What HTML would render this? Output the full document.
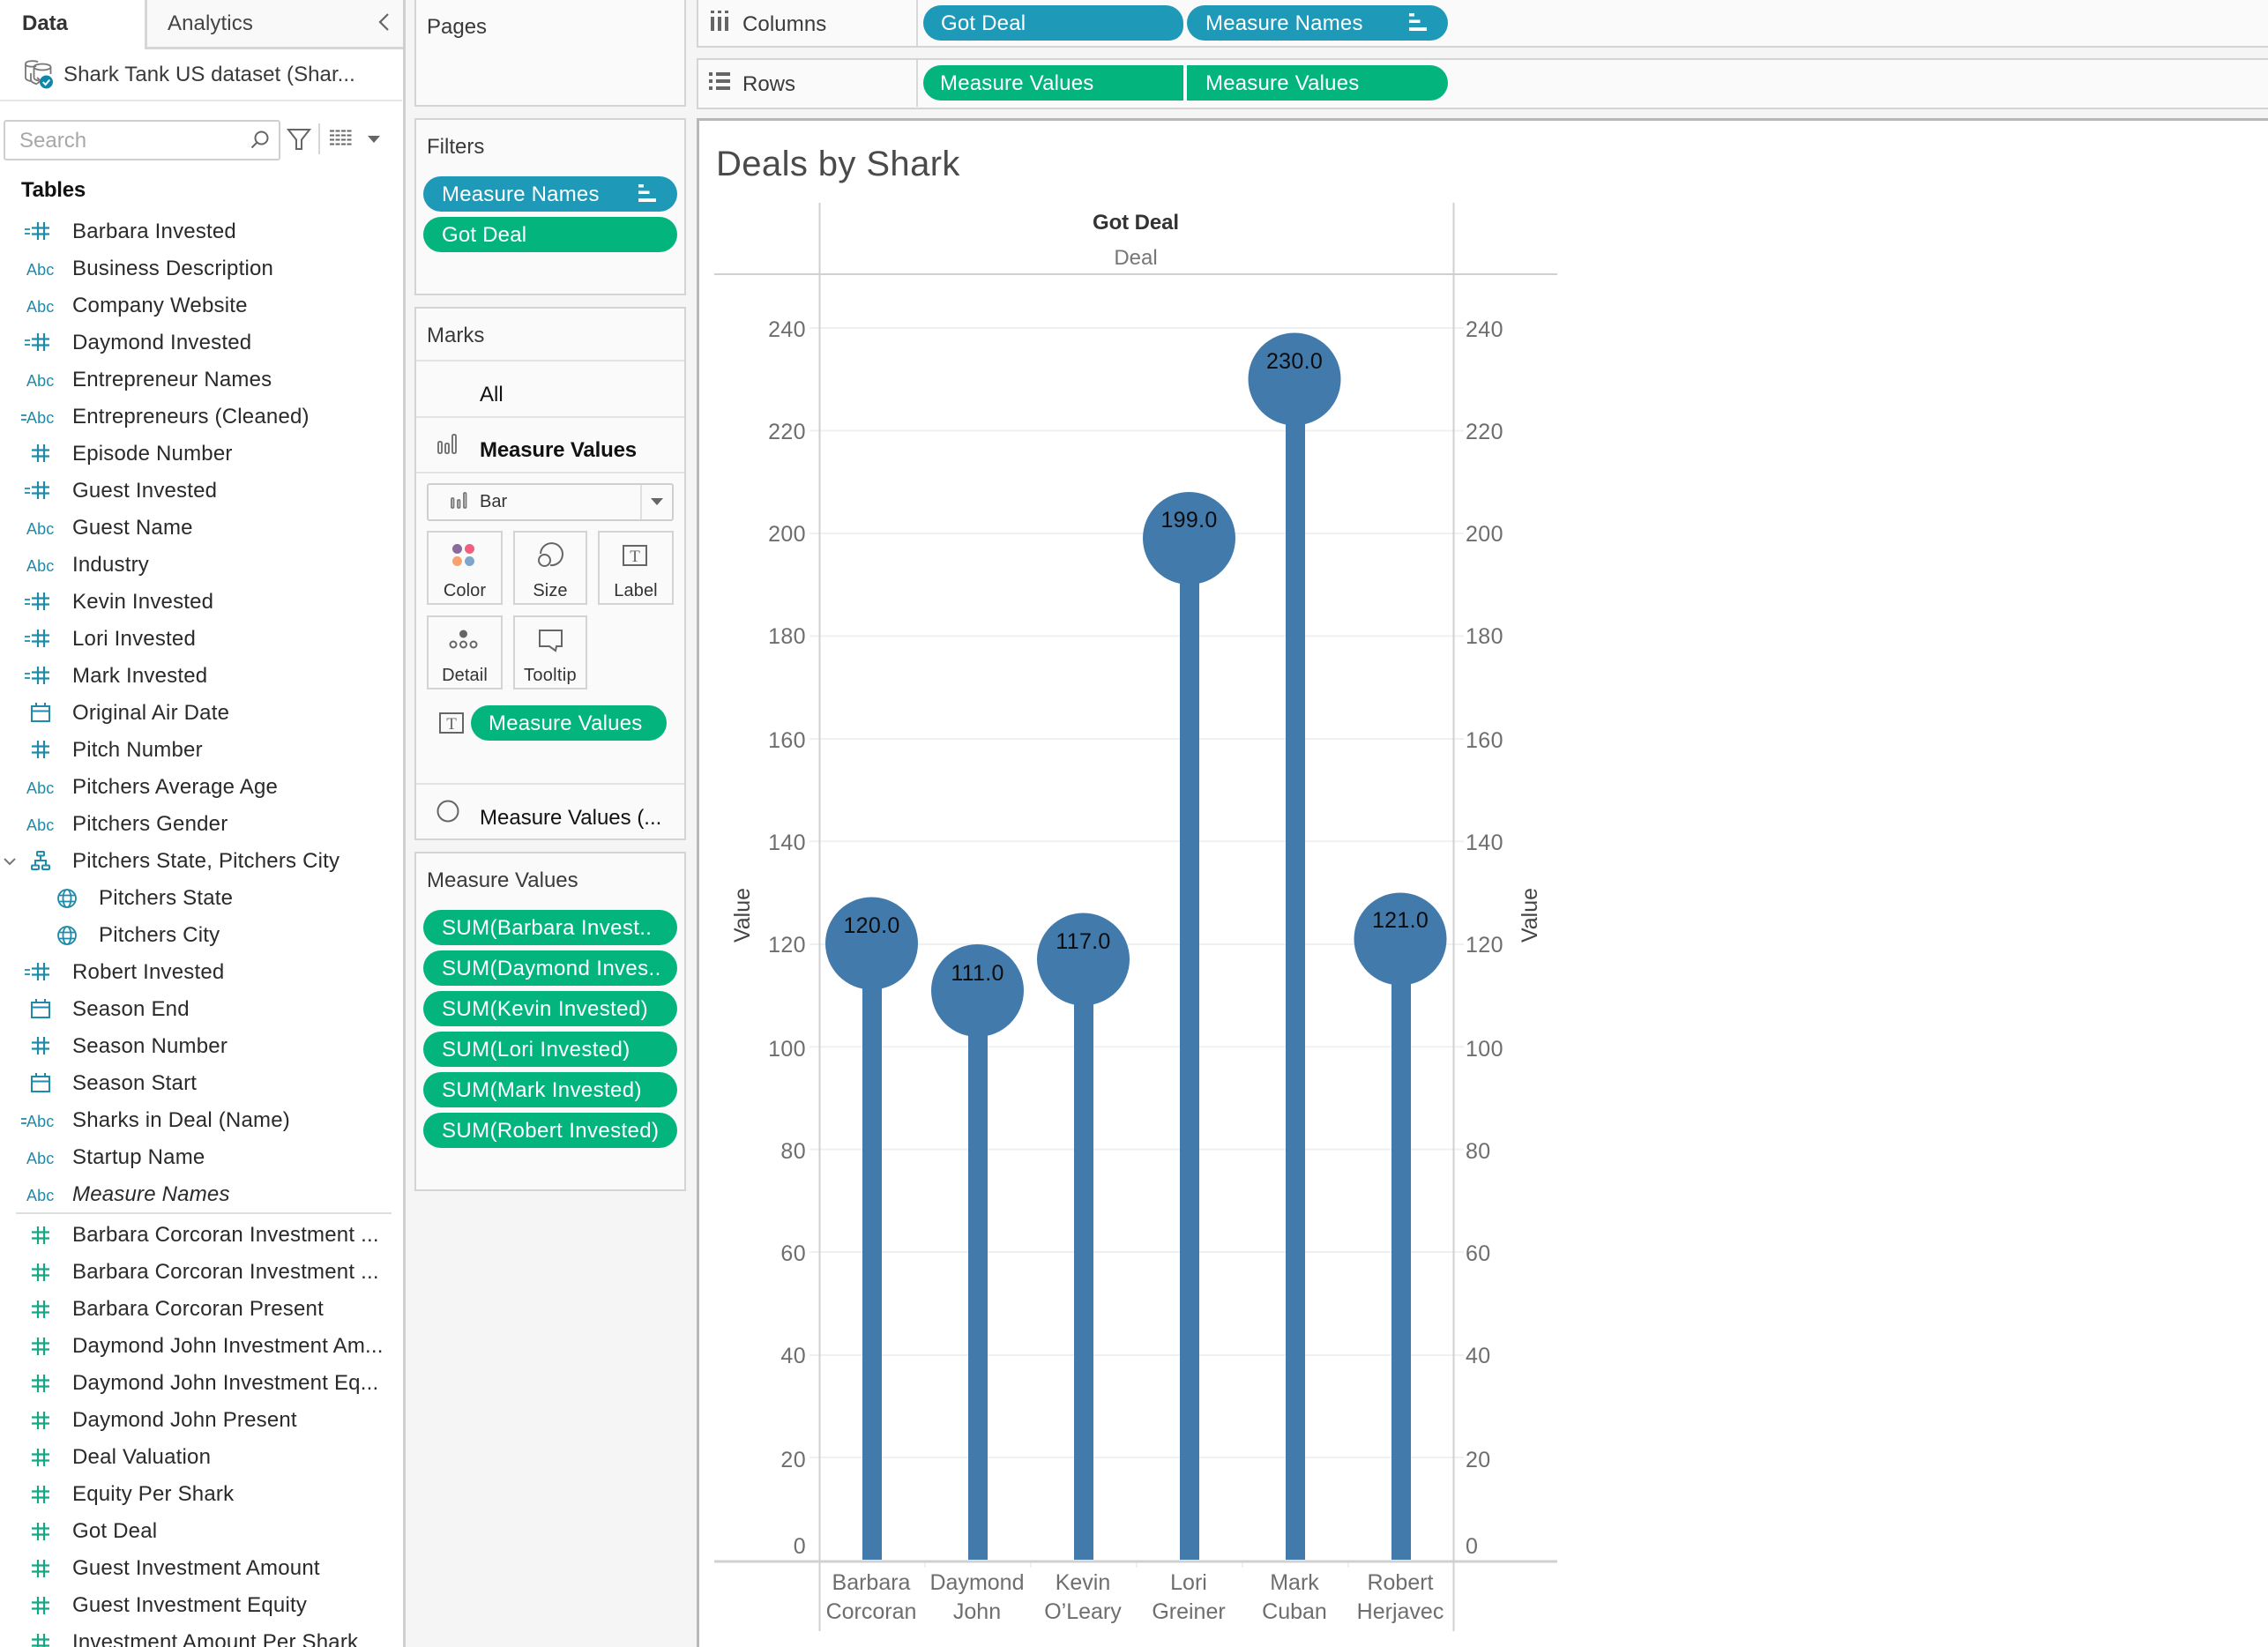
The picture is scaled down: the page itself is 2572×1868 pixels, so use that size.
<!DOCTYPE html>
<html><head><meta charset="utf-8"><title>Deals by Shark</title>
<style>
html,body{margin:0;padding:0;width:2572px;height:1868px;overflow:hidden;background:#f5f5f5;font-family:"Liberation Sans",sans-serif;font-size:24px;color:#2b2b2b}
.a{position:absolute;white-space:nowrap}
#side{position:absolute;left:0;top:0;width:457px;height:1868px;background:#fff;border-right:3px solid #cfcfcf;overflow:hidden}
#list{position:absolute;left:0;top:241px;width:457px}
.r{height:42px;line-height:44px;padding-left:82px;position:relative;white-space:nowrap;color:#2a2a2a;letter-spacing:.2px}
.r.s{padding-left:112px}
.r svg{position:absolute;overflow:visible}
.r .ab{position:absolute;left:30px;top:1px;font-size:18px;color:#1f8bab;letter-spacing:.1px}
.h{left:36px;top:11px;width:20px;height:20px}
.m .h{left:36px;top:12px}
.e{left:28px;top:18px;width:6px;height:8px}
.e2{left:24px;top:19px;width:6px;height:8px}
.c{left:35px;top:10px;width:22px;height:22px}
.g{left:65px;top:11px;width:22px;height:22px}
.card{position:absolute;left:470px;width:304px;background:#fafafa;border:2px solid #d4d4d4}
.sep{position:absolute;left:472px;width:304px;height:2px;background:#e3e3e3}
.p{position:absolute;height:40px;line-height:41px;color:#fff;white-space:nowrap;box-sizing:border-box;padding-left:21px;letter-spacing:.2px}
.sm{letter-spacing:.38px}
.bl{background:#1f99b8}.gr{background:#03b57c}
.pr{border-radius:20px}
.btn{position:absolute;box-sizing:border-box;border:2px solid #d4d4d4;height:84px;background:#fafafa}
.lb{position:absolute;left:0;right:0;text-align:center;top:48px;font-size:20px;line-height:36px;color:#333;letter-spacing:.1px}
</style></head><body>
<svg width="0" height="0" style="position:absolute"><defs>
<symbol id="hb" viewBox="0 0 20 20"><path d="M7 0V20M14 0V20M0 6.500H20M0 13.500H20" stroke="#1f8bab" stroke-width="2.200" fill="none"/></symbol>
<symbol id="hg" viewBox="0 0 20 20"><path d="M7 0V20M14 0V20M0 6.500H20M0 13.500H20" stroke="#12a884" stroke-width="2.200" fill="none"/></symbol>
<symbol id="eq" viewBox="0 0 6 8"><path d="M0 1H6M0 6H6" stroke="#1f8bab" stroke-width="1.800" fill="none"/></symbol>
<symbol id="cal" viewBox="0 0 22 22"><path d="M1 4H21V21H1ZM1 9.500H21M6 0V4M16 0V4" stroke="#1f8bab" stroke-width="2" fill="none"/></symbol>
<symbol id="glb" viewBox="0 0 22 22"><g stroke="#1f8bab" stroke-width="1.800" fill="none"><circle cx="11" cy="11" r="10"/><ellipse cx="11" cy="11" rx="4.500" ry="10"/><path d="M1 7.500H21M1 14.500H21"/></g></symbol>
<symbol id="hier" viewBox="0 0 22 22"><g stroke="#1f8bab" stroke-width="2" fill="none"><rect x="7" y="1" width="8" height="4.500" rx="1"/><rect x="1" y="16.500" width="8" height="4.500" rx="1"/><rect x="13" y="16.500" width="8" height="4.500" rx="1"/><path d="M11 5.500V11M5 16.500V11H17V16.500"/></g></symbol>
<symbol id="srt" viewBox="0 0 20 20"><path d="M0 0H6V3.500H0ZM0 7.500H12.500V11H0ZM0 16H20V20H0Z" fill="#fff"/></symbol>
</defs></svg>

<div id="side">
  <div class="a" style="left:164px;top:-2px;width:293px;height:55px;background:#f9f9f9;border-left:3px solid #d6d6d6;border-bottom:3px solid #d6d6d6"></div>
  <div class="a" style="left:25px;top:6px;line-height:42px;font-weight:bold;color:#333">Data</div>
  <div class="a" style="left:190px;top:6px;line-height:42px;color:#444;letter-spacing:.1px">Analytics</div>
  <svg class="a" style="left:428px;top:14px" width="16" height="22"><path d="M12 2L3 11L12 20" stroke="#666" stroke-width="2.200" fill="none"/></svg>
  <svg class="a" style="left:26px;top:66px" width="36" height="36" viewBox="0 0 36 36">
    <g stroke="#777" stroke-width="1.800" fill="none"><path d="M17 4.500C15 2.500 3 2.500 3 6.500V22C3 24.500 6 25.500 9 26"/><path d="M3 7C3 10 12 10 15 9"/><ellipse cx="22" cy="10" rx="9.500" ry="3.500"/><path d="M12.500 10V22M31.500 10V18M12.500 22C12.500 24 15 25 18 25.500"/><path d="M9 17V24C9 27 12 28 16 29.500M16 22L20 25.500L16 29"/></g>
    <circle cx="26.500" cy="27" r="7.500" fill="#0f87a8"/><path d="M22.800 27L25.600 30L30.300 24.500" stroke="#fff" stroke-width="2" fill="none"/>
  </svg>
  <div class="a" style="left:72px;top:64px;line-height:42px;color:#3a3a3a;letter-spacing:.06px">Shark Tank US dataset (Shar...</div>
  <div class="a" style="left:0;top:113px;width:456px;height:2px;background:#e6e6e6"></div>
  <div class="a" style="left:4px;top:136px;width:310px;height:42px;border:2px solid #cfcfcf;border-radius:3px;background:#fff"></div>
  <div class="a" style="left:22px;top:139px;line-height:42px;color:#a8a8a8">Search</div>
  <svg class="a" style="left:282px;top:146px" width="24" height="24"><circle cx="14.500" cy="10.500" r="7" stroke="#666" stroke-width="2" fill="none"/><path d="M9.500 15.500L3.500 21.500" stroke="#666" stroke-width="2"/></svg>
  <svg class="a" style="left:325px;top:145px" width="28" height="27"><path d="M2 2H26L17 13.500V24H11V13.500Z" stroke="#666" stroke-width="2" fill="none"/></svg>
  <div class="a" style="left:361px;top:140px;width:2px;height:35px;background:#d6d6d6"></div>
  <svg class="a" style="left:374px;top:147px" width="25" height="19"><path d="M0 1.500H25M0 6.500H25M0 11.500H25M0 16.500H25" stroke="#666" stroke-width="2" stroke-dasharray="5 1.500" fill="none"/></svg>
  <svg class="a" style="left:416px;top:153px" width="16" height="10"><path d="M1 1H15L8 9Z" fill="#666"/></svg>
  <div class="a" style="left:24px;top:195px;line-height:42px;font-weight:bold;color:#111;letter-spacing:-.2px">Tables</div>

  <div id="list">
    <div class="r"><svg class="e"><use href="#eq"/></svg><svg class="h"><use href="#hb"/></svg>Barbara Invested</div>
    <div class="r"><span class="ab">Abc</span>Business Description</div>
    <div class="r"><span class="ab">Abc</span>Company Website</div>
    <div class="r"><svg class="e"><use href="#eq"/></svg><svg class="h"><use href="#hb"/></svg>Daymond Invested</div>
    <div class="r"><span class="ab">Abc</span>Entrepreneur Names</div>
    <div class="r"><svg class="e2"><use href="#eq"/></svg><span class="ab">Abc</span>Entrepreneurs (Cleaned)</div>
    <div class="r"><svg class="h"><use href="#hb"/></svg>Episode Number</div>
    <div class="r"><svg class="e"><use href="#eq"/></svg><svg class="h"><use href="#hb"/></svg>Guest Invested</div>
    <div class="r"><span class="ab">Abc</span>Guest Name</div>
    <div class="r"><span class="ab">Abc</span>Industry</div>
    <div class="r"><svg class="e"><use href="#eq"/></svg><svg class="h"><use href="#hb"/></svg>Kevin Invested</div>
    <div class="r"><svg class="e"><use href="#eq"/></svg><svg class="h"><use href="#hb"/></svg>Lori Invested</div>
    <div class="r"><svg class="e"><use href="#eq"/></svg><svg class="h"><use href="#hb"/></svg>Mark Invested</div>
    <div class="r"><svg class="c"><use href="#cal"/></svg>Original Air Date</div>
    <div class="r"><svg class="h"><use href="#hb"/></svg>Pitch Number</div>
    <div class="r"><span class="ab">Abc</span>Pitchers Average Age</div>
    <div class="r"><span class="ab">Abc</span>Pitchers Gender</div>
    <div class="r"><svg style="left:4px;top:18px;width:14px;height:9px"><path d="M1 1L7 7L13 1" stroke="#777" stroke-width="2" fill="none"/></svg><svg class="c"><use href="#hier"/></svg>Pitchers State, Pitchers City</div>
    <div class="r s"><svg class="g"><use href="#glb"/></svg>Pitchers State</div>
    <div class="r s"><svg class="g"><use href="#glb"/></svg>Pitchers City</div>
    <div class="r"><svg class="e"><use href="#eq"/></svg><svg class="h"><use href="#hb"/></svg>Robert Invested</div>
    <div class="r"><svg class="c"><use href="#cal"/></svg>Season End</div>
    <div class="r"><svg class="h"><use href="#hb"/></svg>Season Number</div>
    <div class="r"><svg class="c"><use href="#cal"/></svg>Season Start</div>
    <div class="r"><svg class="e2"><use href="#eq"/></svg><span class="ab">Abc</span>Sharks in Deal (Name)</div>
    <div class="r"><span class="ab">Abc</span>Startup Name</div>
    <div class="r"><span class="ab">Abc</span><i>Measure Names</i></div>
    <div style="height:4px;position:relative"><div style="position:absolute;left:18px;width:426px;top:0;height:2px;background:#dedede"></div></div>
    <div class="r m"><svg class="h"><use href="#hg"/></svg>Barbara Corcoran Investment ...</div>
    <div class="r m"><svg class="h"><use href="#hg"/></svg>Barbara Corcoran Investment ...</div>
    <div class="r m"><svg class="h"><use href="#hg"/></svg>Barbara Corcoran Present</div>
    <div class="r m"><svg class="h"><use href="#hg"/></svg>Daymond John Investment Am...</div>
    <div class="r m"><svg class="h"><use href="#hg"/></svg>Daymond John Investment Eq...</div>
    <div class="r m"><svg class="h"><use href="#hg"/></svg>Daymond John Present</div>
    <div class="r m"><svg class="h"><use href="#hg"/></svg>Deal Valuation</div>
    <div class="r m"><svg class="h"><use href="#hg"/></svg>Equity Per Shark</div>
    <div class="r m"><svg class="h"><use href="#hg"/></svg>Got Deal</div>
    <div class="r m"><svg class="h"><use href="#hg"/></svg>Guest Investment Amount</div>
    <div class="r m"><svg class="h"><use href="#hg"/></svg>Guest Investment Equity</div>
    <div class="r m"><svg class="h"><use href="#hg"/></svg>Investment Amount Per Shark</div>
  </div>
</div>

<!-- cards -->
<div class="card" style="top:-2px;height:119px"></div>
<div class="a" style="left:484px;top:10px;line-height:42px;color:#3a3a3a">Pages</div>

<div class="card" style="top:134px;height:197px"></div>
<div class="a" style="left:484px;top:146px;line-height:42px;color:#3a3a3a">Filters</div>
<div class="p bl pr" style="left:480px;top:200px;width:288px">Measure Names</div>
<svg class="a" style="left:724px;top:209px" width="20" height="20"><use href="#srt"/></svg>
<div class="p gr pr" style="left:480px;top:246px;width:288px">Got Deal</div>

<div class="card" style="top:348px;height:601px"></div>
<div class="a" style="left:484px;top:360px;line-height:42px;color:#3a3a3a">Marks</div>
<div class="sep" style="top:408px"></div>
<div class="a" style="left:544px;top:427px;line-height:42px;color:#111">All</div>
<div class="sep" style="top:472px"></div>
<svg class="a" style="left:495px;top:491px" width="26" height="26"><g fill="none" stroke="#777" stroke-width="2"><rect x="2" y="10" width="4" height="13" rx="1.500"/><rect x="10" y="12" width="4" height="11" rx="1.500"/><rect x="18" y="2" width="4" height="21" rx="1.500"/></g></svg>
<div class="a" style="left:544px;top:490px;line-height:42px;color:#111;font-weight:bold;letter-spacing:-.15px">Measure Values</div>
<div class="sep" style="top:535px"></div>
<div class="a" style="left:484px;top:548px;width:276px;height:39px;border:2px solid #cfcfcf;border-radius:3px"></div>
<div class="a" style="left:726px;top:550px;width:2px;height:39px;background:#e0e0e0"></div>
<svg class="a" style="left:510px;top:558px" width="20" height="20"><g fill="none" stroke="#777" stroke-width="1.800"><rect x="2" y="7" width="2.500" height="11" rx="1"/><rect x="9" y="9" width="2.500" height="9" rx="1"/><rect x="16" y="1" width="2.500" height="17" rx="1"/></g></svg>
<div class="a" style="left:544px;top:549px;line-height:40px;font-size:20px;color:#333">Bar</div>
<svg class="a" style="left:737px;top:564px" width="16" height="10"><path d="M1 1H15L8 9Z" fill="#666"/></svg>

<div class="btn" style="left:484px;top:602px;width:86px"><div class="lb">Color</div></div>
<div class="btn" style="left:582px;top:602px;width:84px"><div class="lb">Size</div></div>
<div class="btn" style="left:678px;top:602px;width:86px"><div class="lb">Label</div></div>
<div class="btn" style="left:484px;top:698px;width:86px"><div class="lb">Detail</div></div>
<div class="btn" style="left:582px;top:698px;width:84px"><div class="lb" style="letter-spacing:.3px">Tooltip</div></div>
<svg class="a" style="left:0;top:0;pointer-events:none" width="800" height="960">
  <circle cx="518.500" cy="622.500" r="5.500" fill="#8a6a9f"/><circle cx="532.500" cy="622.500" r="5.500" fill="#f45f7d"/><circle cx="518.500" cy="636.500" r="5.500" fill="#f9a26c"/><circle cx="532.500" cy="636.500" r="5.500" fill="#7ba7cf"/>
  <g fill="none" stroke="#666" stroke-width="2"><circle cx="617.500" cy="635.500" r="6.500"/><path d="M613 628A12.500 12.500 0 1 1 624 641"/>
  <rect x="707" y="619" width="26" height="22"/><rect x="499" y="809" width="26" height="22"/>
  <circle cx="514" cy="731" r="3.500"/><circle cx="525.500" cy="731" r="3.500"/><circle cx="537" cy="731" r="3.500"/>
  <path d="M612 715H637V733H631L630 738L623 733H612Z"/><circle cx="508" cy="920" r="11.500"/></g>
  <circle cx="525.500" cy="719" r="4.500" fill="#666"/>
  <text x="720" y="637" text-anchor="middle" font-family="Liberation Serif" font-size="19" fill="#666">T</text>
  <text x="512" y="827" text-anchor="middle" font-family="Liberation Serif" font-size="19" fill="#666">T</text>
</svg>
<div class="p gr pr" style="left:534px;top:800px;width:222px;padding-left:20px">Measure Values</div>
<div class="sep" style="top:888px"></div>
<div class="a" style="left:544px;top:907px;line-height:42px;color:#111">Measure Values (...</div>

<div class="card" style="top:966px;height:381px"></div>
<div class="a" style="left:484px;top:978px;line-height:42px;color:#3a3a3a">Measure Values</div>
<div class="p gr pr sm" style="left:480px;top:1032px;width:288px">SUM(Barbara Invest..</div>
<div class="p gr pr sm" style="left:480px;top:1078px;width:288px">SUM(Daymond Inves..</div>
<div class="p gr pr sm" style="left:480px;top:1124px;width:288px">SUM(Kevin Invested)</div>
<div class="p gr pr sm" style="left:480px;top:1170px;width:288px">SUM(Lori Invested)</div>
<div class="p gr pr sm" style="left:480px;top:1216px;width:288px">SUM(Mark Invested)</div>
<div class="p gr pr sm" style="left:480px;top:1262px;width:288px">SUM(Robert Invested)</div>

<!-- shelves -->
<div class="a" style="left:790px;top:-2px;width:1782px;height:54px;background:#fafafa;border-left:2px solid #d4d4d4;border-bottom:2px solid #d4d4d4;box-sizing:content-box"></div>
<div class="a" style="left:1039px;top:0;width:2px;height:53px;background:#d8d8d8"></div>
<svg class="a" style="left:806px;top:12px" width="22" height="24"><path d="M0 0H4V3H0ZM8 0H12V3H8ZM16 0H20V3H16ZM0 7H4V23H0ZM8 7H12V23H8ZM16 7H20V23H16Z" fill="#666"/></svg>
<div class="a" style="left:842px;top:7px;line-height:42px;color:#3a3a3a;letter-spacing:.1px">Columns</div>
<div class="p bl" style="left:1047px;top:6px;width:295px;border-radius:20px 20px 16px 20px;padding-left:20px">Got Deal</div>
<div class="p bl" style="left:1346px;top:6px;width:296px;border-radius:20px">Measure Names</div>
<svg class="a" style="left:1598px;top:15px" width="20" height="20"><use href="#srt"/></svg>

<div class="a" style="left:790px;top:66px;width:1782px;height:54px;background:#fafafa;border-left:2px solid #d4d4d4;border-top:2px solid #d4d4d4;border-bottom:2px solid #d4d4d4"></div>
<div class="a" style="left:1039px;top:68px;width:2px;height:53px;background:#d8d8d8"></div>
<svg class="a" style="left:804px;top:82px" width="24" height="20"><path d="M0 0H4V4H0ZM8 0H24V4H8ZM0 8H4V12H0ZM8 8H24V12H8ZM0 16H4V20H0ZM8 16H24V20H8Z" fill="#666"/></svg>
<div class="a" style="left:842px;top:75px;line-height:42px;color:#3a3a3a">Rows</div>
<div class="p gr" style="left:1047px;top:74px;width:295px;border-radius:20px 0 0 20px;padding-left:19px">Measure Values</div>
<div class="p gr" style="left:1346px;top:74px;width:296px;border-radius:0 20px 20px 0">Measure Values</div>

<!-- view -->
<div class="a" style="left:790px;top:134px;width:1782px;height:1734px;background:#fff;border-left:3px solid #b8b8b8;border-top:3px solid #b8b8b8;box-sizing:border-box"></div>
<div class="a" style="left:812px;top:160px;line-height:52px;font-size:40px;color:#4a4a4a;letter-spacing:.4px">Deals by Shark</div>

<svg class="a" style="left:0;top:0" width="2572" height="1868" font-family="Liberation Sans" font-size="25">
  <!-- gridlines -->
  <g stroke="#f0f0f0" stroke-width="2">
    <path d="M918 372H1660M918 488.500H1660M918 605H1660M918 721.400H1660M918 838H1660M918 954.300H1660M918 1071H1660M918 1187.200H1660M918 1303.600H1660M918 1420H1660M918 1537H1660M918 1653H1660"/>
    <path d="M1049 1772V1778M1169 1772V1778M1289 1772V1778M1409 1772V1778M1529 1772V1778"/>
  </g>
  <g stroke="#d0d0d0" stroke-width="2" fill="none">
    <path d="M929.500 230V1850M1648.500 230V1850"/>
    <path d="M810 311H1766" />
    <path d="M810 1771H1766" stroke-width="3"/>
  </g>
  <text x="1288" y="260" text-anchor="middle" font-size="24" font-weight="bold" fill="#333" letter-spacing="-.1">Got Deal</text>
  <text x="1288" y="300" text-anchor="middle" font-size="24" fill="#777">Deal</text>

  <g text-anchor="end" fill="#6e6e6e" letter-spacing=".4">
    <text x="914" y="382">240</text><text x="914" y="498">220</text><text x="914" y="614">200</text><text x="914" y="730">180</text><text x="914" y="848">160</text><text x="914" y="964">140</text><text x="914" y="1080">120</text><text x="914" y="1198">100</text><text x="914" y="1314">80</text><text x="914" y="1430">60</text><text x="914" y="1546">40</text><text x="914" y="1664">20</text><text x="914" y="1762">0</text>
  </g>
  <g fill="#6e6e6e" letter-spacing=".4">
    <text x="1662" y="382">240</text><text x="1662" y="498">220</text><text x="1662" y="614">200</text><text x="1662" y="730">180</text><text x="1662" y="848">160</text><text x="1662" y="964">140</text><text x="1662" y="1080">120</text><text x="1662" y="1198">100</text><text x="1662" y="1314">80</text><text x="1662" y="1430">60</text><text x="1662" y="1546">40</text><text x="1662" y="1664">20</text><text x="1662" y="1762">0</text>
  </g>
  <text transform="translate(850 1038) rotate(-90)" text-anchor="middle" font-size="25" fill="#444">Value</text>
  <text transform="translate(1743 1038) rotate(-90)" text-anchor="middle" font-size="25" fill="#444">Value</text>

  <g fill="#417aab">
    <rect x="978" y="1070" width="22" height="699"/><circle cx="988.500" cy="1070" r="52.500"/>
    <rect x="1098" y="1123" width="22" height="646"/><circle cx="1108.500" cy="1123.500" r="52.500"/>
    <rect x="1218" y="1088" width="22" height="681"/><circle cx="1228.500" cy="1088" r="52.500"/>
    <rect x="1338" y="610" width="22" height="1159"/><circle cx="1348.500" cy="610.500" r="52.500"/>
    <rect x="1458" y="430" width="22" height="1339"/><circle cx="1468" cy="430" r="52.500"/>
    <rect x="1578" y="1065" width="22" height="704"/><circle cx="1588" cy="1065" r="52.500"/>
  </g>
  <g text-anchor="middle" fill="#0c0c0c" letter-spacing=".3">
    <text x="988.500" y="1058">120.0</text>
    <text x="1108.500" y="1112">111.0</text>
    <text x="1228.500" y="1076">117.0</text>
    <text x="1348.500" y="598">199.0</text>
    <text x="1468" y="418">230.0</text>
    <text x="1588" y="1052">121.0</text>
  </g>
  <g text-anchor="middle" fill="#6e6e6e">
    <text x="988" y="1803">Barbara</text><text x="988" y="1836">Corcoran</text>
    <text x="1108" y="1803">Daymond</text><text x="1108" y="1836">John</text>
    <text x="1228" y="1803">Kevin</text><text x="1228" y="1836">O’Leary</text>
    <text x="1348" y="1803">Lori</text><text x="1348" y="1836">Greiner</text>
    <text x="1468" y="1803">Mark</text><text x="1468" y="1836">Cuban</text>
    <text x="1588" y="1803">Robert</text><text x="1588" y="1836">Herjavec</text>
  </g>
</svg>
</body></html>
